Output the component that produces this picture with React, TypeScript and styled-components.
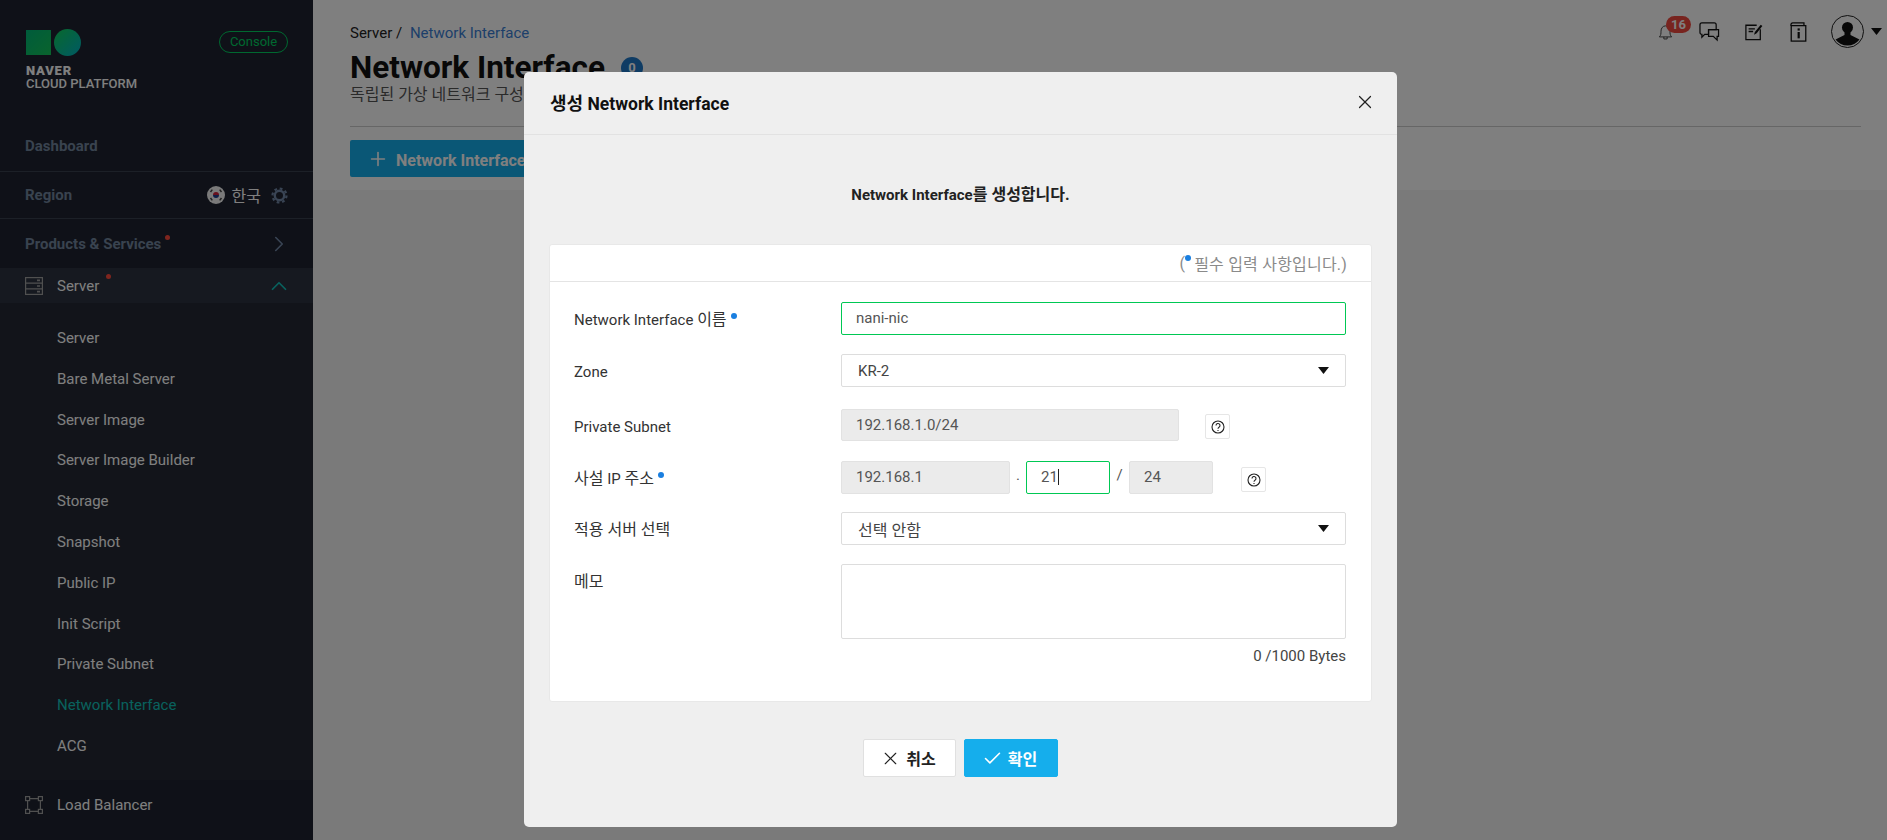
import styled, { createGlobalStyle } from 'styled-components';
import { ChevronRight, ChevronUp, Plus, X, Check } from 'lucide-react';

const FONT = `Roboto, "Noto Sans CJK KR", sans-serif`;

const GlobalStyle = createGlobalStyle`
  html, body { margin: 0; padding: 0; height: 100%; overflow: hidden; }
  body { font-family: ${FONT}; font-size: 15px; color: #222; background: #f5f5f5; }
  * { box-sizing: border-box; }
`;

const subMenus = [
  'Server',
  'Bare Metal Server',
  'Server Image',
  'Server Image Builder',
  'Storage',
  'Snapshot',
  'Public IP',
  'Init Script',
  'Private Subnet',
  'Network Interface',
  'ACG',
];

const HelpIcon = () => (
  <svg width="14" height="14" viewBox="0 0 14 14" fill="none" stroke="#222" strokeWidth="1.100">
    <circle cx="7" cy="7" r="6" />
    <path d="M5 5.500a2 2 0 1 1 3 1.700c-.7.400-1 .8-1 1.600" />
    <path d="M7 10v1" />
  </svg>
);

const Caret = () => (
  <svg width="11" height="7" viewBox="0 0 11 7">
    <path d="M0 0h11L5.500 7z" fill="#111" />
  </svg>
);

const App = () => {
  return (
    <Page>
      <GlobalStyle />
      <Sidebar>
        <LogoArea>
          <div>
            <LogoMark>
              <LogoSquare />
              <LogoCircle />
            </LogoMark>
            <LogoBold>NAVER</LogoBold>
            <LogoText>CLOUD PLATFORM</LogoText>
          </div>
          <ConsolePill>Console</ConsolePill>
        </LogoArea>
        <TopRow $height={64} $pt={12}>
          <RowTitle>Dashboard</RowTitle>
        </TopRow>
        <TopRow $height={47}>
          <RowTitle>Region</RowTitle>
          <RegionRight>
            <svg width="18" height="18" viewBox="0 0 18 18">
              <circle cx="9" cy="9" r="9" fill="#f4f4f4" />
              <path d="M6 9a3 3 0 0 1 6 0z" fill="#d0203a" />
              <path d="M6 9a3 3 0 0 0 6 0z" fill="#1f3f8f" />
              <path d="M3.500 6l1.800-2.400M3.500 12l1.800 2.400M14.500 6l-1.800-2.400M14.500 12l-1.800 2.400" stroke="#444" strokeWidth="1.500" />
            </svg>
            <RegionName>한국</RegionName>
            <svg width="17" height="17" viewBox="0 0 17 17" fill="none" stroke="#7288a8">
              <circle cx="8.500" cy="8.500" r="4.700" strokeWidth="2.400" />
              <circle cx="8.500" cy="8.500" r="7" strokeWidth="2.200" strokeDasharray="2.750 2.750" />
            </svg>
          </RegionRight>
        </TopRow>
        <ProductsRow>
          <RowTitle>
            Products &amp; Services
            <RedDot />
          </RowTitle>
          <ChevronRight size={26} color="#7288a8" strokeWidth={1.500} />
        </ProductsRow>
        <ServerRow>
          <MenuIcon>
            <svg width="18" height="18" viewBox="0 0 18 18" fill="none" stroke="#a0a0a0" strokeWidth="1.200">
              <rect x="0.600" y="0.600" width="16.800" height="16.800" />
              <path d="M0.600 6.200h16.800M0.600 11.800h16.800" />
              <path d="M12 3.400h3M12 9h3M12 14.600h3" strokeWidth="1.600" />
            </svg>
          </MenuIcon>
          <ServerName>
            Server
            <RedDot $top={-3} $left={7} />
          </ServerName>
          <ChevronUp size={26} color="#12c2bb" strokeWidth={1.600} />
        </ServerRow>
        <SubMenu>
          {subMenus.map((name) => (
            <SubItem key={name} $active={name === 'Network Interface'}>
              {name}
            </SubItem>
          ))}
        </SubMenu>
        <BottomRow>
          <MenuIcon>
            <svg width="18" height="18" viewBox="0 0 18 18" fill="none" stroke="#a0a0a0" strokeWidth="1.200">
              <rect x="0.600" y="0.600" width="4" height="4" />
              <rect x="13.400" y="0.600" width="4" height="4" />
              <rect x="0.600" y="13.400" width="4" height="4" />
              <rect x="13.400" y="13.400" width="4" height="4" />
              <path d="M4.600 2.600h8.800M4.600 15.400h8.800M2.600 4.600v8.800M15.400 4.600v8.800" />
            </svg>
          </MenuIcon>
          <ServerName>Load Balancer</ServerName>
        </BottomRow>
      </Sidebar>

      <Main>
        <Header>
          <TopIcons>
            <TopIcon $width={41}>
              <svg width="15" height="18" viewBox="0 0 17 22" fill="none" stroke="#444" strokeWidth="1.200">
                <path d="M1 17c2-2 2-4 2-7 0-3.500 2.200-6.500 5.500-6.500S14 6.500 14 10c0 3 0 5 2 7z" />
                <path d="M6.500 17v2.500h4V17" />
              </svg>
              <Badge>16</Badge>
            </TopIcon>
            <TopIcon $width={46}>
              <svg width="21" height="20" viewBox="0 0 22 21" fill="none" stroke="#111" strokeWidth="1.300">
                <path d="M3 1h13a2 2 0 0 1 2 2v5h-8v5H6l-3 3v-3a2 2 0 0 1-2-2V3a2 2 0 0 1 2-2z" />
                <path d="M10 8h10.500v7H19v4l-4-4h-5z" />
              </svg>
            </TopIcon>
            <TopIcon $width={45}>
              <svg width="18" height="18" viewBox="0 0 20 20" fill="none" stroke="#111" strokeWidth="1.400">
                <path d="M13 2.500H1v16h16V7" />
                <path d="M4 6.500h7M4 9.500h5" strokeWidth="1.600" />
                <path d="M10 13l1-3 6.500-8 1.800 1.400L13 11.500z" fill="#111" stroke="none" />
              </svg>
            </TopIcon>
            <TopIcon $width={41}>
              <svg width="17" height="20" viewBox="0 0 18 22" fill="none" stroke="#111" strokeWidth="1.400">
                <path d="M3 1h12v3" />
                <rect x="1" y="4" width="16" height="17" />
                <path d="M3 1a2 2 0 0 0-2 3" />
                <rect x="8" y="7" width="2.400" height="2.400" fill="#111" stroke="none" />
                <rect x="8" y="11" width="2.400" height="7" fill="#111" stroke="none" />
              </svg>
            </TopIcon>
            <Avatar>
              <svg width="31" height="31" viewBox="0 0 31 31">
                <circle cx="15.500" cy="11.500" r="5.500" fill="#111" />
                <path d="M12.500 15h6v4l9 4.500a15 15 0 0 1-24 0l9-4.500z" fill="#111" />
              </svg>
            </Avatar>
            <Caret />
          </TopIcons>
          <Crumbs>
            Server / <CrumbLink>Network Interface</CrumbLink>
          </Crumbs>
          <TitleRow>
            <Title>Network Interface</Title>
            <CountBadge>0</CountBadge>
          </TitleRow>
          <Description>독립된 가상 네트워크 구성 환경을 제공합니다.</Description>
          <HeaderLine />
          <CreateButton>
            <Plus size={22} strokeWidth={1.800} />
            Network Interface 생성
          </CreateButton>
        </Header>
      </Main>

      <Overlay>
        <Modal>
          <ModalHeader>
            <ModalTitle>
              <Ko $size={18}>생성</Ko> Network Interface
            </ModalTitle>
            <X size={22} color="#222" strokeWidth={1.300} />
          </ModalHeader>
          <ModalBody>
            <Intro>
              Network Interface<Ko $size={16}>를 생성합니다.</Ko>
            </Intro>
            <Card>
              <CardHeader>
                (<BlueDot $gray />필수 입력 사항입니다.)
              </CardHeader>
              <FormArea>
                <FormRow $mb={19}>
                  <Label>
                    Network Interface <Ko $size={16}>이름</Ko>
                    <BlueDot />
                  </Label>
                  <Field $focus>nani-nic</Field>
                </FormRow>
                <FormRow $mb={22}>
                  <Label>Zone</Label>
                  <SelectBox>
                    KR-2
                    <Caret />
                  </SelectBox>
                </FormRow>
                <FormRow $mb={20}>
                  <Label>Private Subnet</Label>
                  <Field $disabled $width={338} $height={32}>
                    192.168.1.0/24
                  </Field>
                  <HelpButton $ml={26} $mt={5}>
                    <HelpIcon />
                  </HelpButton>
                </FormRow>
                <FormRow $mb={18}>
                  <Label>
                    <Ko $size={16}>사설</Ko> IP <Ko $size={16}>주소</Ko>
                    <BlueDot />
                  </Label>
                  <Field $disabled $width={169}>
                    192.168.1
                  </Field>
                  <Separator $width={16}>.</Separator>
                  <Field $focus $width={84}>
                    21<Cursor />
                  </Field>
                  <Separator $width={19}>/</Separator>
                  <Field $disabled $width={84}>
                    24
                  </Field>
                  <HelpButton $ml={28} $mt={6}>
                    <HelpIcon />
                  </HelpButton>
                </FormRow>
                <FormRow $mb={19}>
                  <Label>
                    <Ko $size={16}>적용 서버 선택</Ko>
                  </Label>
                  <SelectBox>
                    <Ko $size={16}>선택 안함</Ko>
                    <Caret />
                  </SelectBox>
                </FormRow>
                <FormRow $mb={0}>
                  <Label>
                    <Ko $size={16}>메모</Ko>
                  </Label>
                  <MemoColumn>
                    <Memo />
                    <ByteCount>0 /1000 Bytes</ByteCount>
                  </MemoColumn>
                </FormRow>
              </FormArea>
            </Card>
            <Buttons>
              <CancelButton>
                <X size={21} strokeWidth={1.300} />
                취소
              </CancelButton>
              <ConfirmButton>
                <Check size={21} strokeWidth={1.800} />
                확인
              </ConfirmButton>
            </Buttons>
          </ModalBody>
        </Modal>
      </Overlay>
    </Page>
  );
};
export default App;

const Page = styled.div`
  display: flex;
  width: 100%;
  height: 840px;
  overflow: hidden;
`;

const Ko = styled.span<{ $size: number }>`
  font-size: ${(p) => p.$size}px;
`;

const Sidebar = styled.div`
  width: 313px;
  flex-shrink: 0;
  height: 100%;
  background: #1e2330;
  color: #fff;
  display: flex;
  flex-direction: column;
`;

const LogoArea = styled.div`
  height: 108px;
  padding: 29px 25px 0 26px;
  display: flex;
  justify-content: space-between;
  align-items: flex-start;
`;

const LogoMark = styled.div`
  display: flex;
  align-items: center;
  gap: 3px;
  height: 27px;
  margin-bottom: 8px;
`;

const LogoSquare = styled.div`
  width: 25px;
  height: 25px;
  background: linear-gradient(135deg, #00b878, #14c85a);
`;

const LogoCircle = styled.div`
  width: 27px;
  height: 27px;
  border-radius: 50%;
  background: linear-gradient(135deg, #10d25a, #00b4c8);
`;

const LogoBold = styled.div`
  font-size: 13px;
  line-height: 13px;
  font-weight: 900;
  color: #fff;
  letter-spacing: 0.800px;
`;

const LogoText = styled.div`
  font-size: 13px;
  line-height: 14px;
  font-weight: 500;
  color: #fff;
`;

const ConsolePill = styled.div`
  width: 69px;
  height: 22px;
  margin-top: 2px;
  border: 1px solid #00d060;
  border-radius: 11px;
  color: #00d060;
  font-size: 13px;
  line-height: 20px;
  text-align: center;
`;

const TopRow = styled.div<{ $height: number; $pt?: number }>`
  height: ${(p) => p.$height}px;
  padding: ${(p) => p.$pt ?? 0}px 25px 0;
  display: flex;
  justify-content: space-between;
  align-items: center;
  border-bottom: 1px solid #39404f;
`;

const ProductsRow = styled.div`
  height: 49px;
  padding: 0 21px 0 25px;
  display: flex;
  justify-content: space-between;
  align-items: center;
`;

const RowTitle = styled.div`
  position: relative;
  font-size: 15px;
  font-weight: 700;
  color: #73869f;
`;

const RedDot = styled.span<{ $top?: number; $left?: number }>`
  position: absolute;
  top: ${(p) => p.$top ?? 0}px;
  margin-left: ${(p) => p.$left ?? 4}px;
  width: 5px;
  height: 5px;
  border-radius: 50%;
  background: #ff4a3c;
`;

const RegionRight = styled.div`
  display: flex;
  align-items: center;
  gap: 7px;
`;

const RegionName = styled.span`
  font-size: 16px;
  color: #fff;
  margin-right: 3px;
`;

const ServerRow = styled.div`
  height: 35px;
  background: #2c3240;
  padding: 0 21px 0 25px;
  display: flex;
  align-items: center;
`;

const MenuIcon = styled.div`
  width: 32px;
  display: flex;
  align-items: center;
`;

const ServerName = styled.div`
  position: relative;
  flex: 1;
  font-size: 15px;
  color: #fff;
`;

const SubMenu = styled.div`
  background: #242934;
  padding: 15px 0 13px;
  display: flex;
  flex-direction: column;
`;

const SubItem = styled.div<{ $active?: boolean }>`
  height: 40.800px;
  line-height: 40.800px;
  padding-left: 57px;
  font-size: 15px;
  color: ${(p) => (p.$active ? '#12c2bb' : '#fff')};
`;

const BottomRow = styled.div`
  flex: 1;
  background: #1e2330;
  padding: 16px 25px 0;
  display: flex;
  align-items: flex-start;
`;

const Main = styled.div`
  flex: 1;
  min-width: 0;
`;

const Header = styled.div`
  position: relative;
  height: 190px;
  background: #fff;
  padding: 22px 26px 0 37px;
`;

const TopIcons = styled.div`
  position: absolute;
  top: 15px;
  right: 5px;
  display: flex;
  align-items: center;
`;

const TopIcon = styled.div<{ $width: number }>`
  position: relative;
  width: ${(p) => p.$width}px;
  display: flex;
  align-items: center;
`;

const Badge = styled.span`
  position: absolute;
  top: -7px;
  left: 8px;
  width: 25px;
  height: 17px;
  border-radius: 9px;
  background: #f0483e;
  color: #fff;
  font-size: 13px;
  font-weight: 700;
  line-height: 17px;
  text-align: center;
`;

const Avatar = styled.div`
  width: 33px;
  height: 33px;
  margin-right: 7px;
  border-radius: 50%;
  border: 1px solid #222;
  overflow: hidden;
`;

const Crumbs = styled.div`
  font-size: 15px;
  line-height: 22px;
  color: #222;
`;

const CrumbLink = styled.span`
  color: #3b7fd4;
  margin-left: 4px;
`;

const TitleRow = styled.div`
  display: flex;
  align-items: center;
  gap: 16px;
  margin-top: 5px;
  height: 38px;
`;

const Title = styled.h1`
  margin: 0;
  font-size: 31.500px;
  line-height: 34px;
  font-weight: 700;
  color: #111;
`;

const CountBadge = styled.span`
  width: 22px;
  height: 22px;
  border-radius: 50%;
  background: #1f78c8;
  color: #fff;
  font-size: 13px;
  font-weight: 700;
  line-height: 22px;
  text-align: center;
`;

const Description = styled.div`
  font-size: 16px;
  line-height: 20px;
  color: #555;
  margin-top: -2px;
`;

const HeaderLine = styled.div`
  height: 1px;
  background: #ccc;
  margin-top: 21px;
`;

const CreateButton = styled.div`
  display: inline-flex;
  align-items: center;
  gap: 7px;
  height: 37px;
  margin-top: 13px;
  padding: 0 20px 0 17px;
  border-radius: 2px;
  background: #15aeec;
  color: #fff;
  font-size: 16px;
  font-weight: 700;
`;

const Overlay = styled.div`
  position: fixed;
  inset: 0;
  background: rgba(0, 0, 0, 0.5);
  padding: 72px 0 0 524px;
`;

const Modal = styled.div`
  width: 873px;
  height: 755px;
  background: #efefef;
  border-radius: 5px;
`;

const ModalHeader = styled.div`
  height: 63px;
  padding: 0 21px 2px 26px;
  display: flex;
  justify-content: space-between;
  align-items: center;
  border-bottom: 1px solid #e2e2e2;
`;

const ModalTitle = styled.div`
  font-size: 17.500px;
  font-weight: 700;
  color: #111;
`;

const ModalBody = styled.div`
  padding: 0 25px;
`;

const Intro = styled.div`
  height: 109px;
  padding-top: 50px;
  font-size: 15px;
  line-height: 20px;
  font-weight: 700;
  color: #222;
  text-align: center;
`;

const Card = styled.div`
  width: 823px;
  height: 458px;
  background: #fff;
  border: 1px solid #e8e8e8;
  border-radius: 3px;
`;

const CardHeader = styled.div`
  height: 37px;
  padding-right: 24px;
  display: flex;
  justify-content: flex-end;
  align-items: center;
  border-bottom: 1px solid #e4e4e4;
  font-size: 16px;
  letter-spacing: 0.200px;
  white-space: pre;
  color: #8a8a8a;
`;

const FormArea = styled.div`
  padding: 20px 24px 0;
`;

const FormRow = styled.div<{ $mb: number }>`
  display: flex;
  align-items: flex-start;
  margin-bottom: ${(p) => p.$mb}px;
`;

const Label = styled.div`
  width: 267px;
  flex-shrink: 0;
  padding-top: 8px;
  font-size: 15px;
  line-height: 20px;
  color: #333;
`;

const BlueDot = styled.span<{ $gray?: boolean }>`
  display: inline-block;
  width: 6px;
  height: 6px;
  margin: ${(p) => (p.$gray ? '10px 3px 0 0' : '0 0 0 4px')};
  border-radius: 50%;
  background: #1a7fe0;
  vertical-align: 6px;
  align-self: flex-start;
`;

const Field = styled.div<{ $focus?: boolean; $disabled?: boolean; $width?: number; $height?: number }>`
  width: ${(p) => (p.$width ? `${p.$width}px` : '505px')};
  height: ${(p) => p.$height ?? 33}px;
  padding-left: 14px;
  border: 1px solid ${(p) => (p.$focus ? '#00c853' : p.$disabled ? '#e2e2e2' : '#ddd')};
  border-radius: 2px;
  background: ${(p) => (p.$disabled ? '#ebebeb' : '#fff')};
  font-size: 15px;
  line-height: 30px;
  color: #555;
  flex-shrink: 0;
`;

const Cursor = styled.span`
  display: inline-block;
  width: 1px;
  height: 16px;
  background: #222;
  vertical-align: -3px;
`;

const SelectBox = styled.div`
  width: 505px;
  height: 33px;
  padding: 0 16px 0 16px;
  border: 1px solid #ddd;
  border-radius: 2px;
  background: #fff;
  display: flex;
  justify-content: space-between;
  align-items: center;
  font-size: 15px;
  color: #444;
`;

const Separator = styled.div<{ $width: number }>`
  width: ${(p) => p.$width}px;
  text-align: center;
  line-height: 28px;
  color: #555;
`;

const HelpButton = styled.div<{ $ml: number; $mt: number }>`
  width: 25px;
  height: 25px;
  margin: ${(p) => p.$mt}px 0 0 ${(p) => p.$ml}px;
  border: 1px solid #e6e6e6;
  border-radius: 2px;
  background: #fff;
  display: flex;
  justify-content: center;
  align-items: center;
`;

const MemoColumn = styled.div`
  width: 505px;
`;

const Memo = styled.div`
  height: 75px;
  border: 1px solid #ddd;
  border-radius: 2px;
  background: #fff;
`;

const ByteCount = styled.div`
  margin-top: 7px;
  font-size: 15px;
  line-height: 20px;
  color: #444;
  text-align: right;
`;

const Buttons = styled.div`
  display: flex;
  justify-content: center;
  gap: 8px;
  margin-top: 37px;
`;

const CancelButton = styled.div`
  width: 93px;
  height: 38px;
  padding-right: 3px;
  display: flex;
  justify-content: center;
  align-items: center;
  gap: 5px;
  background: #fff;
  border: 1px solid #e0e0e0;
  border-radius: 2px;
  font-size: 16px;
  font-weight: 700;
  color: #222;
`;

const ConfirmButton = styled(CancelButton)`
  width: 94px;
  background: #15aeec;
  border-color: #15aeec;
  color: #fff;
`;
